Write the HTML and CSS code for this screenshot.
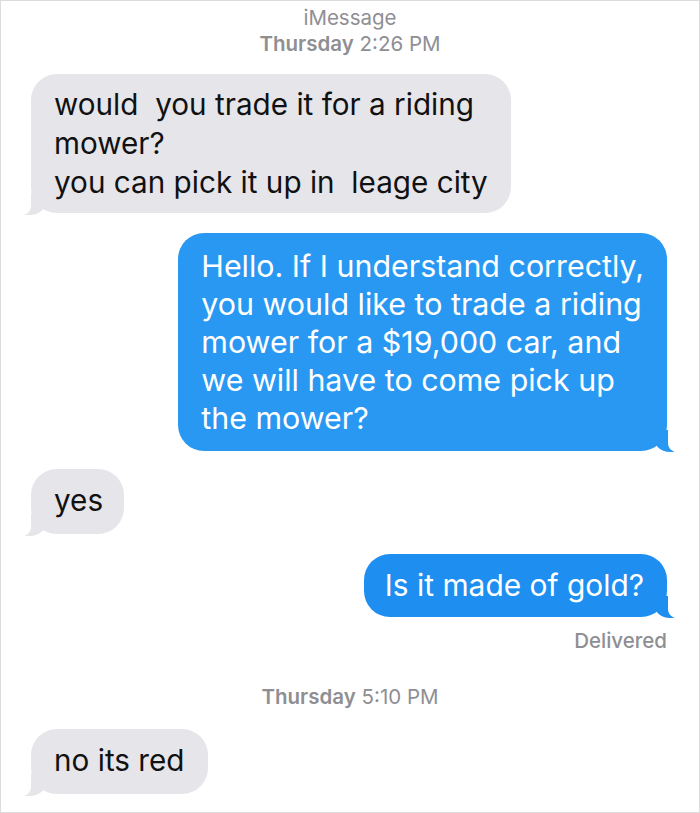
FILE: index.html
```html
<!DOCTYPE html>
<html>
<head>
<meta charset="utf-8">
<link rel="stylesheet" href="styles.css">
</head>
<body>
<div class="screen">
  <div class="stamp">
    <div class="service">iMessage</div>
    <div class="time"><b>Thursday</b> 2:26 PM</div>
  </div>

  <div class="row in first">
    <div class="bubble gray">would&nbsp; you trade it for a riding<br>mower?<br>you can pick it up in&nbsp; leage city</div>
  </div>

  <div class="row out gap20">
    <div class="bubble blue">Hello. If I understand correctly,<br>you would like to trade a riding<br>mower for a $19,000 car, and<br>we will have to come pick up<br>the mower?</div>
  </div>

  <div class="row in gap18">
    <div class="bubble gray short tight">yes</div>
  </div>

  <div class="row out gap20">
    <div class="bubble blue short deep">Is it made of gold?</div>
  </div>

  <div class="delivered">Delivered</div>

  <div class="stamp second">
    <div class="time"><b>Thursday</b> 5:10 PM</div>
  </div>

  <div class="row in gap19">
    <div class="bubble gray short">no its red</div>
  </div>
</div>
</body>
</html>
```

FILE: styles.css
```css
html, body {
  margin: 0;
  padding: 0;
  background: #ffffff;
}

.screen {
  box-sizing: border-box;
  width: 700px;
  height: 813px;
  border: 1px solid #dcdcdc;
  padding: 4px 32px 0 30px;
  font-family: Inter, "Liberation Sans", Arial, sans-serif;
  overflow: hidden;
}

.stamp {
  text-align: center;
  color: #8e8e93;
  font-size: 20.5px;
  line-height: 26px;
  padding-left: 2px;
}

.stamp b {
  font-weight: 600;
}

.stamp.second {
  margin-top: 32px;
}

.row {
  display: flex;
}

.row.in {
  justify-content: flex-start;
}

.row.out {
  justify-content: flex-end;
}

.row.first {
  margin-top: 17px;
}

.row.gap20 {
  margin-top: 20px;
}

.row.gap18 {
  margin-top: 18px;
}

.row.gap19 {
  margin-top: 19px;
}

.bubble {
  position: relative;
  border-radius: 26px;
  white-space: nowrap;
}

.bubble.gray {
  background: #e5e5ea;
  color: #111111;
  padding: 11px 23px 11px 23px;
  font-size: 29.7px;
  line-height: 39px;
}

.bubble.blue {
  background: #2898f2;
  color: #ffffff;
  padding: 14px 23px 14px 23px;
  font-size: 30.4px;
  line-height: 38px;
}

.bubble.gray.short {
  padding-top: 12px;
  padding-bottom: 14px;
}

.bubble.gray.tight {
  padding-right: 21px;
}

.bubble.blue.short {
  padding-top: 12px;
  padding-bottom: 13px;
  padding-left: 21px;
  padding-right: 23px;
}

.bubble.deep {
  background: #1e8ef0;
  font-size: 29.9px;
}

.bubble.gray::before {
  content: "";
  position: absolute;
  bottom: -2px;
  left: -9px;
  width: 24px;
  height: 22px;
  background: #e5e5ea;
  border-bottom-right-radius: 16px 14px;
}

.bubble.gray::after {
  content: "";
  position: absolute;
  bottom: -3px;
  left: -13px;
  width: 13px;
  height: 24px;
  background: #ffffff;
  border-bottom-right-radius: 11px 10px;
}

.bubble.blue::before {
  content: "";
  position: absolute;
  bottom: -1px;
  right: -11px;
  width: 24px;
  height: 22px;
  background: inherit;
  border-bottom-left-radius: 16px 14px;
}

.bubble.blue::after {
  content: "";
  position: absolute;
  bottom: -2px;
  right: -15px;
  width: 14px;
  height: 24px;
  background: #ffffff;
  border-bottom-left-radius: 11px 10px;
}

.delivered {
  text-align: right;
  color: #8e8e93;
  font-size: 20.5px;
  font-weight: 500;
  line-height: 22px;
  margin-top: 13px;
}
```
